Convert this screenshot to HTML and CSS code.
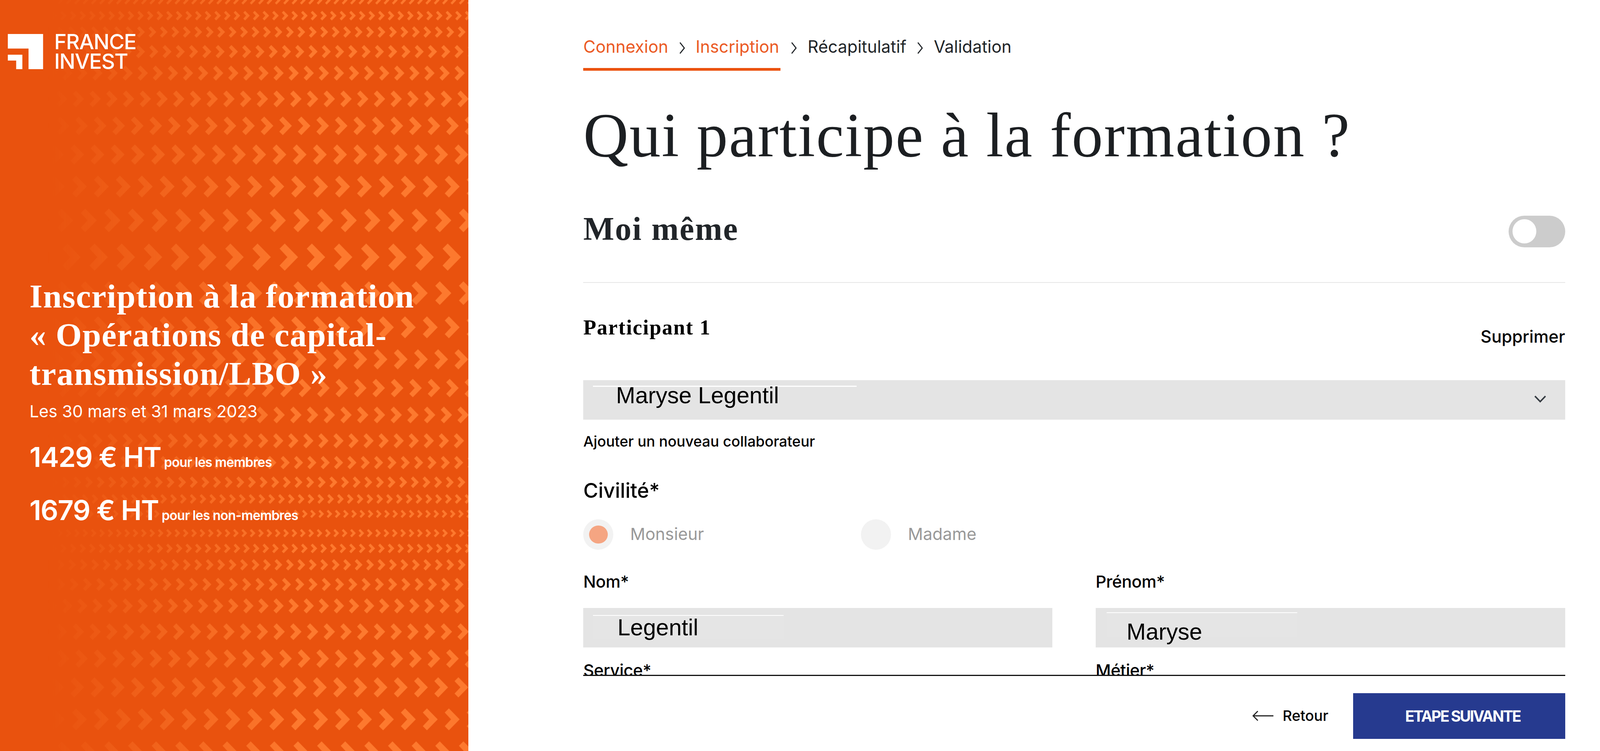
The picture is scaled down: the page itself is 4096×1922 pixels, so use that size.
FILE: index.html
```html
<!DOCTYPE html>
<html lang="fr">
<head>
<meta charset="utf-8">
<title>Inscription à la formation</title>
<link rel="stylesheet" href="styles.css">
</head>
<body>
<div class="page">
  <aside class="side">
    <svg class="side-bg" width="1199" height="1922" viewBox="0 0 1288 2065" preserveAspectRatio="none" aria-hidden="true">
      <defs>
        <linearGradient id="fade" gradientUnits="userSpaceOnUse" x1="130" y1="0" x2="820" y2="0">
          <stop offset="0" stop-color="#fff" stop-opacity="0"/>
          <stop offset="1" stop-color="#fff" stop-opacity="1"/>
        </linearGradient>
        <mask id="fade-mask" maskUnits="userSpaceOnUse" x="0" y="0" width="1288" height="2065">
          <rect width="1288" height="2065" fill="url(#fade)"/>
        </mask>
        <pattern id="c" width="1" height="1" patternUnits="userSpaceOnUse">
          <polygon points="0,.19 .19,0 .68,.5 .19,1 0,.81 .29,.5" fill="#fd792e"/>
        </pattern>
        <pattern id="r1" href="#c" patternTransform="translate(1262 -10.5) scale(23)"/>
        <pattern id="r2" href="#c" patternTransform="translate(1252 29.75) scale(26.5)"/>
        <pattern id="r3" href="#c" patternTransform="translate(1259 72.25) scale(31.5)"/>
        <pattern id="r4" href="#c" patternTransform="translate(1250 123.75) scale(36.5)"/>
        <pattern id="r5" href="#c" patternTransform="translate(1250 180.25) scale(41.5)"/>
        <pattern id="r6" href="#c" patternTransform="translate(1258 249) scale(46)"/>
        <pattern id="r7" href="#c" patternTransform="translate(1227 320.5) scale(51)"/>
        <pattern id="r8" href="#c" patternTransform="translate(1250 397.2) scale(55.6)"/>
        <pattern id="r9" href="#c" patternTransform="translate(1223 482.85) scale(60.3)"/>
        <pattern id="r10" href="#c" patternTransform="translate(1262 573.5) scale(65)"/>
        <pattern id="r11" href="#c" patternTransform="translate(1217 669.65) scale(74.7)"/>
        <pattern id="r12" href="#c" patternTransform="translate(1197 773.5) scale(65)"/>
        <pattern id="r13" href="#c" patternTransform="translate(1223 869.85) scale(60.3)"/>
        <pattern id="r14" href="#c" patternTransform="translate(1250 960.2) scale(55.6)"/>
        <pattern id="r15" href="#c" patternTransform="translate(1227 1041.65) scale(50.7)"/>
        <pattern id="r16" href="#c" patternTransform="translate(1258 1118) scale(46)"/>
        <pattern id="r17" href="#c" patternTransform="translate(1248 1191.3) scale(41.4)"/>
        <pattern id="r18" href="#c" patternTransform="translate(1249 1253.65) scale(36.7)"/>
        <pattern id="r19" href="#c" patternTransform="translate(1258 1310) scale(32)"/>
        <pattern id="r20" href="#c" patternTransform="translate(1251 1358.5) scale(27)"/>
        <pattern id="r21" href="#c" patternTransform="translate(1260 1401.7) scale(22.6)"/>
        <pattern id="r22" href="#c" patternTransform="translate(1262 1454.5) scale(23)"/>
        <pattern id="r23" href="#c" patternTransform="translate(1252 1494.75) scale(26.5)"/>
        <pattern id="r24" href="#c" patternTransform="translate(1259 1537.25) scale(31.5)"/>
        <pattern id="r25" href="#c" patternTransform="translate(1250 1588.75) scale(36.5)"/>
        <pattern id="r26" href="#c" patternTransform="translate(1250 1645.25) scale(41.5)"/>
        <pattern id="r27" href="#c" patternTransform="translate(1258 1714) scale(46)"/>
        <pattern id="r28" href="#c" patternTransform="translate(1227 1785.5) scale(51)"/>
        <pattern id="r29" href="#c" patternTransform="translate(1250 1862.2) scale(55.6)"/>
        <pattern id="r30" href="#c" patternTransform="translate(1223 1947.85) scale(60.3)"/>
        <pattern id="r31" href="#c" patternTransform="translate(1262 2038.5) scale(65)"/>
      </defs>
      <g mask="url(#fade-mask)">
        <rect y="-10.5" width="1288" height="23" fill="url(#r1)"/>
        <rect y="29.75" width="1288" height="26.5" fill="url(#r2)"/>
        <rect y="72.25" width="1288" height="31.5" fill="url(#r3)"/>
        <rect y="123.75" width="1288" height="36.5" fill="url(#r4)"/>
        <rect y="180.25" width="1288" height="41.5" fill="url(#r5)"/>
        <rect y="249" width="1288" height="46" fill="url(#r6)"/>
        <rect y="320.5" width="1288" height="51" fill="url(#r7)"/>
        <rect y="397.2" width="1288" height="55.6" fill="url(#r8)"/>
        <rect y="482.85" width="1288" height="60.3" fill="url(#r9)"/>
        <rect y="573.5" width="1288" height="65" fill="url(#r10)"/>
        <rect y="669.65" width="1288" height="74.7" fill="url(#r11)"/>
        <rect y="773.5" width="1288" height="65" fill="url(#r12)"/>
        <rect y="869.85" width="1288" height="60.3" fill="url(#r13)"/>
        <rect y="960.2" width="1288" height="55.6" fill="url(#r14)"/>
        <rect y="1041.65" width="1288" height="50.7" fill="url(#r15)"/>
        <rect y="1118" width="1288" height="46" fill="url(#r16)"/>
        <rect y="1191.3" width="1288" height="41.4" fill="url(#r17)"/>
        <rect y="1253.65" width="1288" height="36.7" fill="url(#r18)"/>
        <rect y="1310" width="1288" height="32" fill="url(#r19)"/>
        <rect y="1358.5" width="1288" height="27" fill="url(#r20)"/>
        <rect y="1401.7" width="1288" height="22.6" fill="url(#r21)"/>
        <rect y="1454.5" width="1288" height="23" fill="url(#r22)"/>
        <rect y="1494.75" width="1288" height="26.5" fill="url(#r23)"/>
        <rect y="1537.25" width="1288" height="31.5" fill="url(#r24)"/>
        <rect y="1588.75" width="1288" height="36.5" fill="url(#r25)"/>
        <rect y="1645.25" width="1288" height="41.5" fill="url(#r26)"/>
        <rect y="1714" width="1288" height="46" fill="url(#r27)"/>
        <rect y="1785.5" width="1288" height="51" fill="url(#r28)"/>
        <rect y="1862.2" width="1288" height="55.6" fill="url(#r29)"/>
        <rect y="1947.85" width="1288" height="60.3" fill="url(#r30)"/>
        <rect y="2038.5" width="1288" height="65" fill="url(#r31)"/>
      </g>
    </svg>
    <div class="brand">
      <svg class="brand-mark" width="90.3" height="90.3" viewBox="0 0 97 97" aria-hidden="true">
        <path d="M0 0H97V97H57V40H0Z M0 57H40V97H23V73H0Z" fill="#fff"/>
      </svg>
      <div class="brand-name">FRANCE<br>INVEST</div>
    </div>
    <div class="hero">
      <h2 class="hero-title">Inscription à la formation<br>« Opérations de capital-<br>transmission/LBO »</h2>
      <p class="hero-date">Les 30 mars et 31 mars 2023</p>
      <p class="price price-first">1429 € HT<span class="price-note">pour les membres</span></p>
      <p class="price price-second">1679 € HT<span class="price-note">pour les non-membres</span></p>
    </div>
  </aside>
  <main class="main">
    <nav class="stepper">
      <div class="step-group">
        <span class="step step-active">Connexion</span>
        <svg class="step-sep" width="18.6" height="29.8" viewBox="0 0 20 32" aria-hidden="true"><path d="M4 1 L16 16 L4 31"/></svg>
        <span class="step step-active">Inscription</span>
      </div>
      <svg class="step-sep" width="18.6" height="29.8" viewBox="0 0 20 32" aria-hidden="true"><path d="M4 1 L16 16 L4 31"/></svg>
      <span class="step">Récapitulatif</span>
      <svg class="step-sep" width="18.6" height="29.8" viewBox="0 0 20 32" aria-hidden="true"><path d="M4 1 L16 16 L4 31"/></svg>
      <span class="step">Validation</span>
    </nav>
    <div class="scroll">
      <h1 class="title">Qui participe à la formation ?</h1>
      <div class="self-row">
        <h2 class="self-title">Moi même</h2>
        <div class="toggle"><span class="toggle-knob"></span></div>
      </div>
      <div class="part-head">
        <h3 class="part-title">Participant 1</h3>
        <span class="part-remove">Supprimer</span>
      </div>
      <div class="field field-select">
        <span class="ghost ghost-select"></span>
        <span class="value">Maryse Legentil</span>
        <svg class="caret" width="29.8" height="18.6" viewBox="0 0 32 20" aria-hidden="true"><path d="M1.5 2 L16 17 L30.5 2"/></svg>
      </div>
      <p class="hint">Ajouter un nouveau collaborateur</p>
      <p class="civ">Civilité*</p>
      <div class="radios">
        <div class="radio-opt">
          <span class="radio"><span class="radio-dot"></span></span>
          <span class="radio-label">Monsieur</span>
        </div>
        <div class="radio-opt">
          <span class="radio"></span>
          <span class="radio-label">Madame</span>
        </div>
      </div>
      <div class="grid">
        <div class="cell">
          <label class="label">Nom*</label>
          <div class="field field-nom">
            <span class="ghost ghost-nom"></span>
            <span class="value">Legentil</span>
          </div>
        </div>
        <div class="cell">
          <label class="label">Prénom*</label>
          <div class="field field-prenom">
            <span class="ghost ghost-prenom"></span>
            <span class="value">Maryse</span>
          </div>
        </div>
        <div class="cell">
          <label class="label">Service*</label>
        </div>
        <div class="cell">
          <label class="label">Métier*</label>
        </div>
      </div>
    </div>
    <footer class="footer">
      <a class="back">
        <svg class="back-arrow" width="54" height="26" viewBox="0 0 58 28" aria-hidden="true"><path d="M58 14H2 M15 1 L2 14 L15 27"/></svg>
        <span>Retour</span>
      </a>
      <button class="next">ETAPE SUIVANTE</button>
    </footer>
  </main>
</div>
</body>
</html>
```

FILE: styles.css
```css
* {
  box-sizing: border-box;
}
html, body {
  margin: 0;
  padding: 0;
  background: #fff;
  overflow: hidden;
}
h1, h2, h3, p {
  margin: 0;
  font-weight: inherit;
}
.page {
  width: 4096px;
  height: 1922px;
  display: flex;
  font-family: Inter, "Liberation Sans", sans-serif;
  color: #000;
  overflow: hidden;
}

/* left panel */
.side {
  position: relative;
  flex: 0 0 1199px;
  height: 1922px;
  background: #e9520e;
  color: #fff;
  overflow: hidden;
}
.side-bg {
  position: absolute;
  left: 0;
  top: 0;
  display: block;
}
.brand {
  position: relative;
  display: flex;
  align-items: center;
  gap: 27.93px;
  padding: 81.92px 0 0 20.48px;
}
.brand-mark {
  display: block;
  flex: none;
}
.brand-name {
  font-size: 54px;
  line-height: 50.27px;
  letter-spacing: -1.4px;
  font-weight: 500;
}
.hero {
  position: relative;
  margin-top: 527.8px;
  padding-left: 75.4px;
}
.hero-title {
  font-family: "Liberation Serif", serif;
  font-weight: 700;
  font-size: 85.64px;
  line-height: 98.68px;
  letter-spacing: 1.58px;
  white-space: nowrap;
}
.hero-date {
  margin-top: 18.62px;
  font-size: 42.82px;
  line-height: 55.85px;
  letter-spacing: -0.1px;
}
.price {
  font-size: 70.75px;
  line-height: 85.64px;
  font-weight: 600;
  letter-spacing: -1.4px;
  white-space: nowrap;
}
.price-first {
  margin-top: 46.55px;
}
.price-second {
  margin-top: 36.3px;
}
.price-note {
  margin-left: 7.45px;
  font-size: 33.5px;
  letter-spacing: -0.93px;
}

/* right column */
.main {
  flex: 1;
  min-width: 0;
  padding: 92.16px 89.37px 0 294.16px;
  display: flex;
  flex-direction: column;
}
.stepper {
  display: flex;
  align-items: flex-start;
  gap: 25.7px;
  font-size: 43.1px;
  line-height: 55.85px;
  color: #212529;
}
.step-group {
  display: flex;
  align-items: flex-start;
  gap: 25.7px;
  padding: 0 2.8px 26.07px 0;
  border-bottom: 7.45px solid #eb530f;
}
.step-active {
  color: #eb5a24;
}
.step {
  white-space: nowrap;
}
.step-sep {
  display: block;
  flex: none;
  margin-top: 15.83px;
}
.step-sep path {
  fill: none;
  stroke: #212529;
  stroke-width: 3;
}
.scroll {
  height: 1477.3px;
  margin-top: 71.68px;
  border-bottom: 3.72px solid #111;
  overflow: hidden;
}
.title {
  font-family: "Liberation Serif", serif;
  font-weight: 400;
  font-size: 160.1px;
  line-height: 186.18px;
  letter-spacing: 2.51px;
  color: #1c1f22;
  white-space: nowrap;
}
.self-row {
  display: flex;
  justify-content: space-between;
  align-items: flex-start;
  margin-top: 100.54px;
  padding-bottom: 89.37px;
  border-bottom: 2.8px solid #e6e6e6;
}
.self-title {
  font-family: "Liberation Serif", serif;
  font-weight: 700;
  font-size: 83.78px;
  line-height: 93.09px;
  letter-spacing: 2.33px;
  color: #212529;
}
.toggle {
  display: flex;
  align-items: center;
  width: 144.3px;
  height: 81px;
  margin-top: 12.1px;
  padding-left: 9.3px;
  border-radius: 41px;
  background: #ccc;
}
.toggle-knob {
  display: block;
  width: 61.44px;
  height: 62.4px;
  border-radius: 50%;
  background: #fff;
}
.part-head {
  display: flex;
  justify-content: space-between;
  align-items: flex-start;
  margin-top: 81.9px;
}
.part-title {
  font-family: "Liberation Serif", serif;
  font-weight: 700;
  font-size: 54px;
  line-height: 65.16px;
  letter-spacing: 1.95px;
}
.part-remove {
  margin-top: 27.93px;
  font-size: 43.29px;
  line-height: 55.85px;
  font-weight: 500;
}
.field {
  position: relative;
  height: 100.54px;
  background: #e4e4e4;
  font-family: "Liberation Sans", Arial, sans-serif;
  font-size: 59.11px;
  line-height: 67.03px;
}
.value {
  position: relative;
  display: block;
}
.ghost {
  position: absolute;
  height: 61.44px;
  border-top: 2.8px solid #fff;
  background: #e5e5e5;
}
.field-select {
  display: flex;
  justify-content: space-between;
  margin-top: 83.78px;
  padding: 4.65px 48.4px 0 83.78px;
}
.ghost-select {
  left: 25.13px;
  top: 13.96px;
  width: 674.9px;
  height: 2.8px;
  border-top: 0;
  background: #fff;
}
.caret {
  display: block;
  margin-top: 34.44px;
}
.caret path {
  fill: none;
  stroke: #343a40;
  stroke-width: 4;
}
.field-nom {
  padding: 15.83px 0 0 87.5px;
}
.ghost-nom {
  left: 25.13px;
  top: 17.69px;
  width: 487.8px;
}
.field-prenom {
  padding: 27px 0 0 79.13px;
}
.ghost-prenom {
  left: 27.93px;
  top: 11.17px;
  width: 488.7px;
}
.hint {
  margin-top: 34.44px;
  font-size: 37.24px;
  line-height: 44.68px;
  font-weight: 500;
}
.civ {
  margin-top: 69.82px;
  font-size: 52.13px;
  line-height: 65.16px;
  font-weight: 500;
}
.radios {
  display: flex;
  margin-top: 40.96px;
}
.radio-opt {
  flex: 0 0 711px;
  display: flex;
  align-items: center;
  gap: 42.82px;
}
.radio {
  display: flex;
  align-items: center;
  justify-content: center;
  width: 77.26px;
  height: 78.2px;
  border-radius: 50%;
  background: #f2f2f2;
}
.radio-dot {
  display: block;
  width: 47.48px;
  height: 46.55px;
  border-radius: 50%;
  background: #f5a582;
}
.radio-label {
  padding-bottom: 2.8px;
  font-size: 42.82px;
  line-height: 55.85px;
  color: #999;
}
.grid {
  display: grid;
  grid-template-columns: 1200.9px 1201.8px;
  column-gap: 110.8px;
  row-gap: 31.65px;
  margin-top: 53.99px;
}
.label {
  display: block;
  font-size: 42.82px;
  line-height: 55.85px;
  letter-spacing: -0.47px;
  font-weight: 500;
  margin-bottom: 39.1px;
}
.footer {
  display: flex;
  justify-content: flex-end;
  align-items: center;
  gap: 63.3px;
  margin-top: 43.75px;
}
.back {
  display: flex;
  align-items: center;
  gap: 23.27px;
  font-size: 37.24px;
  font-weight: 500;
  line-height: 46.55px;
}
.back-arrow {
  display: block;
}
.back-arrow path {
  fill: none;
  stroke: #222;
  stroke-width: 3;
}
.next {
  width: 542.7px;
  height: 117.3px;
  padding: 0 0 0 18.6px;
  border: 0;
  background: #263a8f;
  color: #fff;
  font-family: Inter, "Liberation Sans", sans-serif;
  font-size: 39.1px;
  font-weight: 700;
  letter-spacing: -2.8px;
}
```
